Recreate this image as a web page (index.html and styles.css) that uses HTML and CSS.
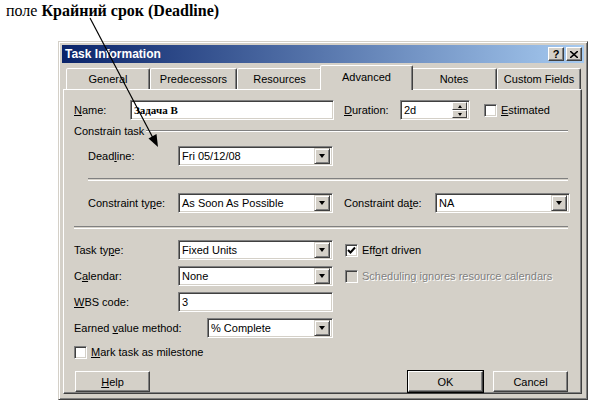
FILE: index.html
```html
<!DOCTYPE html>
<html lang="en">
<head>
  <meta charset="UTF-8" />
  <title>Task Information</title>
  <link rel="stylesheet" href="styles.css">
</head>
<body>
  <div class="caption">поле <b>Крайний срок (Deadline)</b></div>

  <!-- callout arrow pointing at the Deadline field -->
  <svg class="callout" width="594" height="409" viewBox="0 0 594 409">
    <line x1="90" y1="18" x2="153" y2="138" stroke="#000" stroke-width="1.2" />
    <polygon points="158,147 156.5,134 148.5,138.5" fill="#000" />
  </svg>

  <div class="dialog">
    <div class="titlebar">
      <span class="title">Task Information</span>
      <div class="tb-btns">
        <span class="tb-btn">?</span>
        <span class="tb-btn close">
          <svg width="8" height="7" viewBox="0 0 8 7"><path d="M0 0 L8 7 M8 0 L0 7" stroke="#000" stroke-width="1.6" /></svg>
        </span>
      </div>
    </div>

    <div class="tabs">
      <div class="tab w84">General</div>
      <div class="tab w87">Predecessors</div>
      <div class="tab w85">Resources</div>
      <div class="tab active w89">Advanced</div>
      <div class="tab w86">Notes</div>
      <div class="tab w84">Custom Fields</div>
    </div>

    <div class="panel">
      <div class="row">
        <span class="lbl w56"><u>N</u>ame:</span>
        <div class="field w204 ru">Задача В</div>
        <span class="lbl w56 ml10"><u>D</u>uration:</span>
        <div class="field w70 spin">
          <span>2d</span>
          <div class="spinner">
            <span class="sbtn"><i class="up"></i></span>
            <span class="sbtn"><i class="down"></i></span>
          </div>
        </div>
        <span class="check ml14"></span>
        <span class="chk-lbl"><u>E</u>stimated</span>
      </div>

      <div class="group">
        <span>Constrain task</span>
        <div class="etch grow"></div>
      </div>

      <div class="row mt8 indent">
        <span class="lbl w90">Dead<u>l</u>ine:</span>
        <div class="combo w155"><span>Fri 05/12/08</span><span class="drop"><i></i></span></div>
      </div>

      <div class="etch mt12 indent-line"></div>

      <div class="row mt12 indent">
        <span class="lbl w90">Constraint ty<u>p</u>e:</span>
        <div class="combo w155"><span>As Soon As Possible</span><span class="drop"><i></i></span></div>
        <span class="lbl w91 ml11">Constraint da<u>t</u>e:</span>
        <div class="combo w135"><span>NA</span><span class="drop"><i></i></span></div>
      </div>

      <div class="etch mt13"></div>

      <div class="row mt11">
        <span class="lbl w104">Task ty<u>p</u>e:</span>
        <div class="combo w155"><span>Fixed Units</span><span class="drop"><i></i></span></div>
        <span class="check checked ml12">
          <svg width="9" height="9" viewBox="0 0 9 9"><path d="M1 4 L3.5 6.5 L8 1.5" fill="none" stroke="#000" stroke-width="2" /></svg>
        </span>
        <span class="chk-lbl">Eff<u>o</u>rt driven</span>
      </div>

      <div class="row mt6">
        <span class="lbl w104">C<u>a</u>lendar:</span>
        <div class="combo w155"><span>None</span><span class="drop"><i></i></span></div>
        <span class="check disabled ml12"></span>
        <span class="chk-lbl disabled">Schedulin<u>g</u> ignores resource calendars</span>
      </div>

      <div class="row mt6">
        <span class="lbl w104"><u>W</u>BS code:</span>
        <div class="field w155">3</div>
      </div>

      <div class="row mt6">
        <span class="lbl w133">Earned <u>v</u>alue method:</span>
        <div class="combo w126"><span>% Complete</span><span class="drop"><i></i></span></div>
      </div>

      <div class="row mt7 short">
        <span class="check"></span>
        <span class="chk-lbl"><u>M</u>ark task as milestone</span>
      </div>

      <div class="buttons">
        <span class="btn"><u>H</u>elp</span>
        <span class="spacer"></span>
        <span class="btn default">OK</span>
        <span class="btn">Cancel</span>
      </div>
    </div>
  </div>
</body>
</html>
```

FILE: styles.css
```css
body {
  margin: 0;
  background: #ffffff;
  position: relative;
  width: 594px;
  height: 409px;
  overflow: hidden;
  font-family: 'Liberation Sans', Arial, sans-serif;
  font-size: 11px;
  color: #000;
}

.caption {
  font-family: 'Liberation Serif', 'Times New Roman', serif;
  font-size: 16px;
  line-height: 20px;
  padding: 1px 0 0 6px;
  height: 21px;
}

.callout {
  position: absolute;
  left: 0;
  top: 0;
  z-index: 5;
  pointer-events: none;
}

/* window frame, classic 3d look */
.dialog {
  margin: 19px 0 0 58px;
  width: 530px;
  height: 359px;
  box-sizing: border-box;
  background: #d4d0c8;
  padding: 3px;
  border: 1px solid;
  border-color: #d4d0c8 #404040 #404040 #d4d0c8;
  box-shadow: inset 1px 1px #fff, inset -1px -1px #808080;
  display: flex;
  flex-direction: column;
}

.titlebar {
  height: 18px;
  background: linear-gradient(to right, #0a246a, #a6caf0);
  display: flex;
  align-items: center;
  justify-content: space-between;
  padding: 0 2px 0 3px;
}

.title {
  color: #fff;
  font-weight: bold;
  font-size: 12px;
}

.tb-btns {
  display: flex;
  gap: 2px;
}

.tb-btn {
  width: 14px;
  height: 12px;
  background: #d4d0c8;
  border: 1px solid;
  border-color: #fff #404040 #404040 #fff;
  box-shadow: inset -1px -1px #808080;
  font-weight: bold;
  font-size: 11px;
  line-height: 12px;
  text-align: center;
  display: flex;
  align-items: center;
  justify-content: center;
}

/* tab strip */
.tabs {
  display: flex;
  align-items: flex-end;
  margin: 2px 0 0 4px;
  height: 24px;
  position: relative;
  z-index: 2;
}

.tab {
  box-sizing: border-box;
  height: 21px;
  border: 1px solid;
  border-bottom: none;
  border-color: #fff #404040 transparent #fff;
  box-shadow: inset -1px 0 #808080;
  border-radius: 2px 2px 0 0;
  text-align: center;
  line-height: 20px;
  background: #d4d0c8;
}

.tab.active {
  margin: 0 -2px -1px -2px;
  padding: 0 2px;
  line-height: 22px;
  position: relative;
  z-index: 3;
  height: 25px;
}

.tab.active.w89 { width: 93px; }

.panel {
  flex: 1;
  margin: 0 2px 2px 1px;
  border: 1px solid;
  border-color: #fff #404040 #404040 #fff;
  box-shadow: inset -1px -1px #808080;
  padding: 10px 13px 0 10px;
  display: flex;
  flex-direction: column;
}

.row {
  display: flex;
  align-items: center;
  height: 20px;
  flex-shrink: 0;
}

.row.short { height: 14px; }
.indent { padding-left: 14px; }

.lbl { flex-shrink: 0; }

.field, .combo {
  box-sizing: border-box;
  height: 20px;
  background: #fff;
  border: 1px solid;
  border-color: #808080 #fff #fff #808080;
  box-shadow: inset 1px 1px #404040, inset -1px -1px #d4d0c8;
  padding: 0 3px;
  display: flex;
  align-items: center;
  flex-shrink: 0;
}

.field.ru {
  font-family: 'Liberation Serif', 'Times New Roman', serif;
  font-size: 11px;
  font-weight: bold;
}

.combo {
  justify-content: space-between;
  padding: 0 2px 0 3px;
}

.drop {
  box-sizing: border-box;
  width: 16px;
  height: 16px;
  background: #d4d0c8;
  border: 1px solid;
  border-color: #d4d0c8 #404040 #404040 #d4d0c8;
  box-shadow: inset 1px 1px #fff, inset -1px -1px #808080;
  display: flex;
  align-items: center;
  justify-content: center;
}

.drop i {
  width: 0;
  height: 0;
  border-left: 3.5px solid transparent;
  border-right: 3.5px solid transparent;
  border-top: 4px solid #000;
}

.spin {
  justify-content: space-between;
  padding-right: 2px;
}

.spinner {
  display: flex;
  flex-direction: column;
}

.sbtn {
  box-sizing: border-box;
  width: 15px;
  height: 8px;
  background: #d4d0c8;
  border: 1px solid;
  border-color: #fff #404040 #404040 #fff;
  display: flex;
  align-items: center;
  justify-content: center;
}

.sbtn .up, .sbtn .down {
  width: 0;
  height: 0;
  border-left: 2.5px solid transparent;
  border-right: 2.5px solid transparent;
}

.sbtn .up { border-bottom: 3px solid #000; }
.sbtn .down { border-top: 3px solid #000; }

.check {
  box-sizing: border-box;
  width: 13px;
  height: 13px;
  background: #fff;
  border: 1px solid;
  border-color: #808080 #fff #fff #808080;
  box-shadow: inset 1px 1px #404040, inset -1px -1px #d4d0c8;
  flex-shrink: 0;
  display: flex;
  align-items: center;
  justify-content: center;
}

.check.disabled { background: #d4d0c8; }

.chk-lbl { margin-left: 4px; white-space: nowrap; }

.chk-lbl.disabled {
  color: #808080;
  text-shadow: 1px 1px #fff;
}

/* etched separators */
.etch {
  height: 1px;
  border-top: 1px solid #808080;
  border-bottom: 1px solid #fff;
  flex-shrink: 0;
}

.indent-line { margin-left: 14px; }
.grow { flex: 1; height: 0; margin-left: 2px; }

.group {
  display: flex;
  align-items: center;
  height: 14px;
  margin-top: 4px;
  flex-shrink: 0;
}

.buttons {
  display: flex;
  margin-top: 12px;
  padding-left: 1px;
  gap: 10px;
}

.spacer { flex: 1; }

.btn {
  box-sizing: border-box;
  width: 75px;
  height: 21px;
  background: #d4d0c8;
  border: 1px solid;
  border-color: #fff #404040 #404040 #fff;
  box-shadow: inset -1px -1px #808080;
  display: flex;
  align-items: center;
  justify-content: center;
}

.btn.default {
  outline: 1px solid #000;
}

.w56 { width: 56px; }
.w70 { width: 70px; }
.w84 { width: 84px; }
.w85 { width: 85px; }
.w86 { width: 86px; }
.w87 { width: 87px; }
.w89 { width: 89px; }
.w90 { width: 90px; }
.w91 { width: 91px; }
.w104 { width: 104px; }
.w126 { width: 126px; }
.w133 { width: 133px; }
.w135 { width: 135px; }
.w155 { width: 155px; }
.w204 { width: 204px; }

.ml10 { margin-left: 10px; }
.ml11 { margin-left: 11px; }
.ml12 { margin-left: 12px; }
.ml14 { margin-left: 14px; }
.mt6 { margin-top: 6px; }
.mt7 { margin-top: 7px; }
.mt8 { margin-top: 8px; }
.mt11 { margin-top: 11px; }
.mt12 { margin-top: 12px; }
.mt13 { margin-top: 13px; }
```
